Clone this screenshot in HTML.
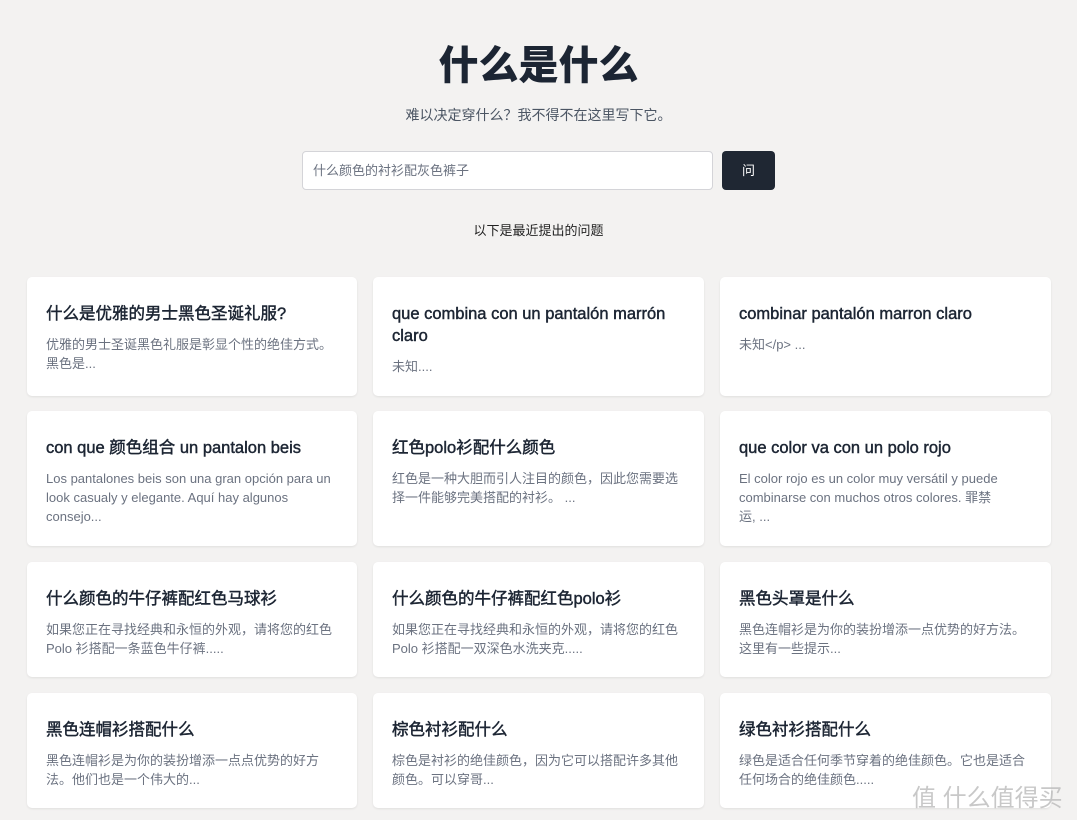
<!DOCTYPE html>
<html><head><meta charset="utf-8"><style>
*{margin:0;padding:0;box-sizing:border-box}
body{width:1077px;height:820px;overflow:hidden;background:#f3f2f1;font-family:"Liberation Sans","Noto Sans CJK SC",sans-serif;color:#1f2733;position:relative}
h1{position:absolute;top:40px;left:0;width:1077px;text-align:center;font-size:40px;font-weight:900;line-height:52px;color:#1c2533}
.sub{position:absolute;top:105px;width:1077px;text-align:center;font-size:14px;color:#4b5563;line-height:20px}
.inp{position:absolute;left:302px;top:151px;width:411px;height:39px;background:#fff;border:1px solid #d4d4d8;border-radius:4px;font-size:13px;color:#6b7280;padding-left:10px;line-height:37px}
.btn{position:absolute;left:722px;top:151px;width:53px;height:39px;background:#1f2733;border-radius:4px;color:#fff;font-size:13px;text-align:center;line-height:39px}
.rec{position:absolute;top:222px;width:1077px;text-align:center;font-size:13px;color:#222;line-height:18px}
.card{position:absolute;background:#fff;border-radius:5px;box-shadow:0 1px 2px rgba(0,0,0,.08);padding:26px 19px 0 19px}
.card h3{font-size:16.5px;font-weight:normal;-webkit-text-stroke:0.45px #1c2533;line-height:22px;color:#1c2533;margin-bottom:10px}
.card p{font-size:13px;line-height:19px;color:#6b7280}
.wm{position:absolute;left:912px;top:778px;font-size:24px;color:#bbb;opacity:.8}
</style></head><body>
<h1>什么是什么</h1>
<div class="sub">难以决定穿什么？我不得不在这里写下它。</div>
<div class="inp">什么颜色的衬衫配灰色裤子</div>
<div class="btn">问</div>
<div class="rec">以下是最近提出的问题</div>

<div class="card" style="left:27px;top:277px;width:330px;height:119px"><h3>什么是优雅的男士黑色圣诞礼服?</h3><p>优雅的男士圣诞黑色礼服是彰显个性的绝佳方式。黑色是...</p></div>
<div class="card" style="left:373px;top:277px;width:331px;height:119px"><h3>que combina con un pantalón marrón<br>claro</h3><p>未知....</p></div>
<div class="card" style="left:720px;top:277px;width:331px;height:119px"><h3>combinar pantalón marron claro</h3><p>未知&lt;/p&gt; ...</p></div>

<div class="card" style="left:27px;top:411px;width:330px;height:135px"><h3>con que 颜色组合 un pantalon beis</h3><p>Los pantalones beis son una gran opción para un look casualy y elegante. Aquí hay algunos consejo...</p></div>
<div class="card" style="left:373px;top:411px;width:331px;height:135px"><h3>红色polo衫配什么颜色</h3><p>红色是一种大胆而引人注目的颜色，因此您需要选择一件能够完美搭配的衬衫。 ...</p></div>
<div class="card" style="left:720px;top:411px;width:331px;height:135px"><h3>que color va con un polo rojo</h3><p>El color rojo es un color muy versátil y puede combinarse con muchos otros colores. 罪禁<br>运, ...</p></div>

<div class="card" style="left:27px;top:562px;width:330px;height:115px"><h3>什么颜色的牛仔裤配红色马球衫</h3><p>如果您正在寻找经典和永恒的外观，请将您的红色 Polo 衫搭配一条蓝色牛仔裤.....</p></div>
<div class="card" style="left:373px;top:562px;width:331px;height:115px"><h3>什么颜色的牛仔裤配红色polo衫</h3><p>如果您正在寻找经典和永恒的外观，请将您的红色 Polo 衫搭配一双深色水洗夹克.....</p></div>
<div class="card" style="left:720px;top:562px;width:331px;height:115px"><h3>黑色头罩是什么</h3><p>黑色连帽衫是为你的装扮增添一点优势的好方法。这里有一些提示...</p></div>

<div class="card" style="left:27px;top:693px;width:330px;height:115px"><h3>黑色连帽衫搭配什么</h3><p>黑色连帽衫是为你的装扮增添一点点优势的好方法。他们也是一个伟大的...</p></div>
<div class="card" style="left:373px;top:693px;width:331px;height:115px"><h3>棕色衬衫配什么</h3><p>棕色是衬衫的绝佳颜色，因为它可以搭配许多其他颜色。可以穿哥...</p></div>
<div class="card" style="left:720px;top:693px;width:331px;height:115px"><h3>绿色衬衫搭配什么</h3><p>绿色是适合任何季节穿着的绝佳颜色。它也是适合任何场合的绝佳颜色.....</p></div>
<div class="wm">值 什么值得买</div>
</body></html>
